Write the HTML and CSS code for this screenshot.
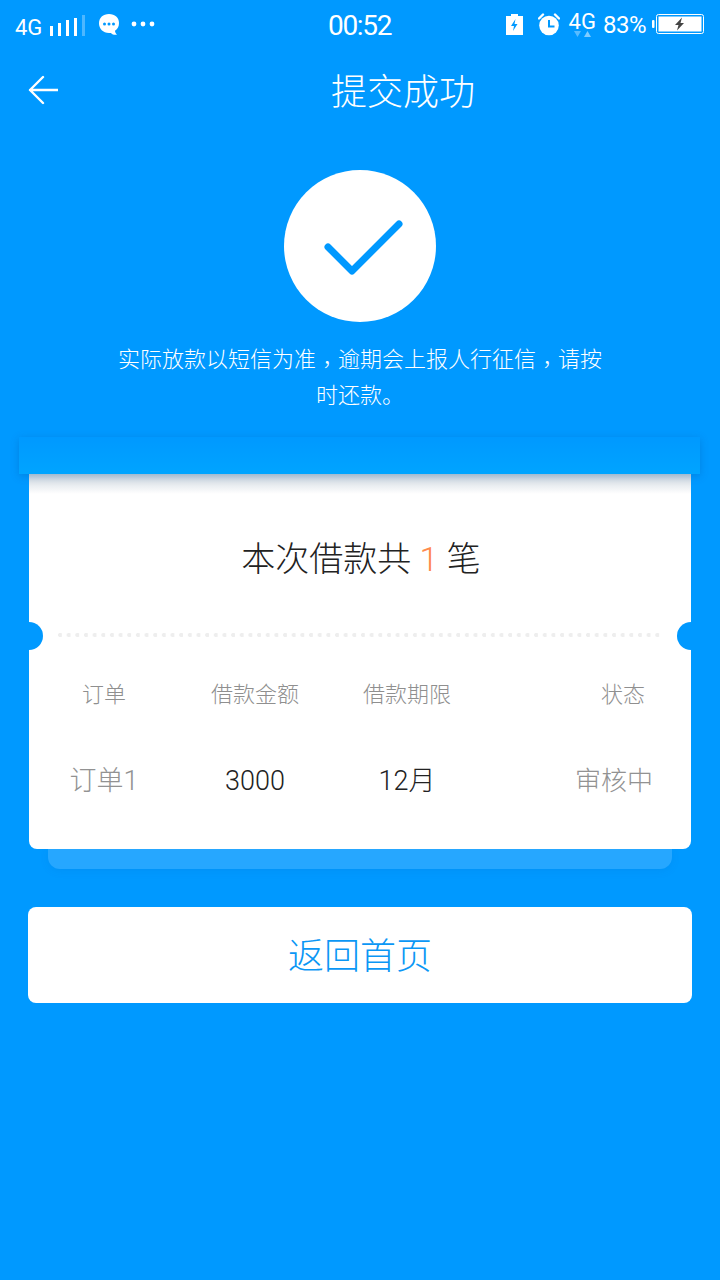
FILE: index.html
```html
<!DOCTYPE html>
<html lang="zh-CN">
<head>
<meta charset="utf-8">
<title>提交成功</title>
<link rel="stylesheet" href="styles.css">
</head>
<body>
<div class="status">
  <div class="status-left">
    <span class="net">4G</span>
    <svg class="signal" width="35" height="21" viewBox="0 0 35 21"><g fill="#fff"><rect x="0" y="11" width="3" height="10"/><rect x="8" y="8" width="3" height="13"/><rect x="16" y="5" width="3" height="16"/><rect x="24" y="3" width="3" height="18"/></g><rect x="32" y="0" width="3" height="21" fill="#fff" opacity=".3"/></svg>
    <svg class="msg" width="22" height="22" viewBox="0 0 22 22"><path d="M11 0c6 0 10 3.600 10 9 0 3.500-1.300 6.100-4 7.700 0 1.300.7 2.700 2 4-2.500.6-4.900-.5-6.100-1.800C12.900 19 12 19 11 19 5 19 1 14.500 1 9.500 1 3.600 5 0 11 0z" fill="#fff"/><g fill="#0099ff"><circle cx="6.500" cy="10" r="1.500"/><circle cx="11" cy="10" r="1.500"/><circle cx="15.500" cy="10" r="1.500"/></g></svg>
    <svg class="dots" width="24" height="6" viewBox="0 0 24 6"><g fill="#fff"><circle cx="3" cy="3" r="2.400"/><circle cx="12" cy="3" r="2.400"/><circle cx="21" cy="3" r="2.400"/></g></svg>
  </div>
  <div class="clock">00:52</div>
  <div class="status-right">
    <svg class="charge" width="17" height="21" viewBox="0 0 17 21"><path d="M5 0h7v2h5v19H0V2h5z" fill="#fff"/><path d="M9.500 5 5 12h3l-1 5 4.500-7h-3z" fill="#0099ff"/></svg>
    <svg class="alarm" width="22" height="23" viewBox="0 0 22 23"><circle cx="11" cy="12.500" r="9.800" fill="#fff"/><path d="M1 5.500 5 1.500M21 5.500 17 1.500" stroke="#fff" stroke-width="2.400" stroke-linecap="round"/><path d="M11 7v6.500h5.500" fill="none" stroke="#0099ff" stroke-width="2"/></svg>
    <span class="net-wrap"><span class="net net-right">4G</span><svg class="arrows" width="17" height="6" viewBox="0 0 17 6"><path d="M0 0h7L3.500 6z" fill="#fff" opacity=".35"/><path d="M10 6h7L13.500 0z" fill="#fff" opacity=".5"/></svg></span>
    <span class="pct">83%</span>
    <svg class="battery" width="52" height="20" viewBox="0 0 52 20"><rect x="0" y="6" width="2.500" height="8" rx="1" fill="#fff"/><rect x="4.500" y=".5" width="47" height="19" rx="2" fill="none" stroke="#fff"/><rect x="6.500" y="2.500" width="43" height="15" fill="#fff"/><path d="M30 3.500 23 11h3.500l-1.500 5.500 7-7.500h-3.500z" fill="#444"/></svg>
  </div>
</div>

<header class="nav">
  <svg class="back" width="30" height="30" viewBox="0 0 30 30"><path d="M15 2 2 15l13 13M2 15h28" fill="none" stroke="#fff" stroke-width="2.400" stroke-linecap="round" stroke-linejoin="round"/></svg>
  <h1 class="title">提交成功</h1>
</header>

<div class="result">
  <div class="circle">
    <svg width="152" height="152" viewBox="0 0 152 152"><path d="M44 77 68 101 115 54" fill="none" stroke="#0099ff" stroke-width="7" stroke-linecap="round" stroke-linejoin="round"/></svg>
  </div>
  <p class="notice">实际放款以短信为准<span class="comma">，</span>逾期会上报人行征信<span class="comma">，</span>请按<br>时还款。</p>
</div>

<section class="ticket">
  <div class="roller"></div>
  <div class="card">
    <div class="card-shade"></div>
    <div class="summary">本次借款共<span class="count"> 1 </span>笔</div>
    <div class="divider">
      <span class="notch notch-left"></span>
      <span class="dotted"></span>
      <span class="notch notch-right"></span>
    </div>
    <div class="row head">
      <span class="c1">订单</span><span class="c2">借款金额</span><span class="c3">借款期限</span><span class="c4">状态</span>
    </div>
    <div class="row vals">
      <span class="c1 muted">订单1</span><span class="c2 num">3000</span><span class="c3 num">12月</span><span class="c4 muted">审核中</span>
    </div>
  </div>
  <div class="under"></div>
</section>

<a class="home">返回首页</a>
</body>
</html>
```

FILE: styles.css
```css
* { box-sizing: border-box; }
html, body { margin: 0; padding: 0; }
body {
  width: 720px;
  height: 1280px;
  overflow: hidden;
  background: #0099ff;
  color: #fff;
  font-family: "Noto Sans CJK SC", "Noto Sans", sans-serif;
  font-weight: 300;
}
.status {
  height: 50px;
  display: flex;
  align-items: center;
  justify-content: space-between;
  position: relative;
  font-family: Roboto, "Liberation Sans", sans-serif;
  font-weight: 400;
}
.status-left { display: flex; align-items: center; padding-left: 15px; }
.net { font-size: 22px; line-height: 26px; }
.status-left .net { margin-top: 6px; }
.signal { margin-left: 8px; }
.msg { margin-left: 13px; margin-top: -1px; }
.dots { margin-left: 11px; margin-top: -3px; }
.clock {
  position: absolute;
  left: 328px;
  top: 10px;
  font-size: 28px;
  line-height: 32px;
  letter-spacing: -1.300px;
}
.status-right { display: flex; align-items: center; padding-right: 16px; }
.charge { margin-top: -1px; }
.alarm { margin-left: 15px; margin-top: -2px; }
.net-wrap { position: relative; margin-left: 9px; margin-top: -6px; }
.net-right { display: block; font-size: 22px; }
.arrows { position: absolute; left: 5px; top: 22px; }
.pct { font-size: 24px; letter-spacing: -.5px; margin-left: 7px; line-height: 30px; }
.battery { margin-left: 6px; margin-top: -2px; }

.nav { height: 80px; display: flex; align-items: center; padding-left: 28px; }
.back { flex: none; }
.title {
  margin: -3px 0 0 273px;
  font-size: 36px;
  font-weight: 300;
  line-height: 80px;
  white-space: nowrap;
}

.result { display: flex; flex-direction: column; align-items: center; padding-top: 40px; }
.circle { width: 152px; height: 152px; border-radius: 50%; background: #fff; }
.notice {
  margin: 17px 0 0;
  width: 490px;
  font-size: 22px;
  line-height: 36px;
  text-align: center;
}
.comma {
  font-family: "Noto Sans CJK TC", sans-serif;
  display: inline-block;
  transform: translateY(5px);
}

.ticket { margin-top: 26px; padding: 0 29px; position: relative; }
.roller {
  height: 37px;
  margin: 0 -9px 0 -10px;
  background: linear-gradient(#0099ff, #00a4ff);
  box-shadow: 0 2px 8px rgba(0, 80, 160, .3);
  position: relative;
  z-index: 2;
}
.card {
  height: 375px;
  background: #fff;
  border-radius: 0 0 8px 8px;
  color: #222;
  position: relative;
  z-index: 1;
  overflow: hidden;
}
.card-shade {
  position: absolute;
  left: 0;
  right: 0;
  top: 0;
  height: 20px;
  background: linear-gradient(#ccd5dd, #fff);
}
.summary {
  padding: 60px 0 0 2px;
  font-size: 34px;
  line-height: 46px;
  text-align: center;
  position: relative;
}
.count {
  color: #ff8a4d;
  font-family: Roboto, sans-serif;
  font-weight: 300;
  white-space: pre;
}
.divider {
  height: 28px;
  margin-top: 40px;
  display: flex;
  align-items: center;
  padding: 0 29px;
  position: relative;
}
.dotted {
  flex: 1;
  height: 4px;
  margin-bottom: 2px;
  background: radial-gradient(circle at 2px 2px, #eeeeee 2px, transparent 2.200px) 0 0 / 8.670px 4px repeat-x;
}
.notch {
  position: absolute;
  top: 0;
  width: 28px;
  height: 28px;
  border-radius: 50%;
  background: #0099ff;
}
.notch-left { left: -14px; }
.notch-right { right: -14px; }
.row { display: grid; grid-template-columns: 150px 152px 152px 208px; text-align: center; }
.head { margin-top: 26px; font-size: 22px; line-height: 32px; color: #8f8f8f; }
.vals {
  margin-top: 53px;
  font-family: Roboto, "Noto Sans CJK SC", sans-serif;
  font-size: 26px;
  line-height: 40px;
  color: #222;
}
.num { font-size: 27px; }
.vals .c1 { font-size: 27px; }
.c4 { text-align: right; }
.head .c4 { padding-right: 46px; }
.vals .c4 { padding-right: 38px; }
.vals .muted { color: #929292; }
.under {
  height: 20px;
  margin: 0 19px;
  background: #26a7ff;
  border-radius: 0 0 12px 12px;
  box-shadow: 0 2px 8px rgba(0, 90, 170, .1);
}
.home {
  display: block;
  margin: 38px 28px 0;
  height: 96px;
  border-radius: 8px;
  background: #fff;
  color: #0b97f5;
  font-size: 36px;
  line-height: 92px;
  text-align: center;
}
```
